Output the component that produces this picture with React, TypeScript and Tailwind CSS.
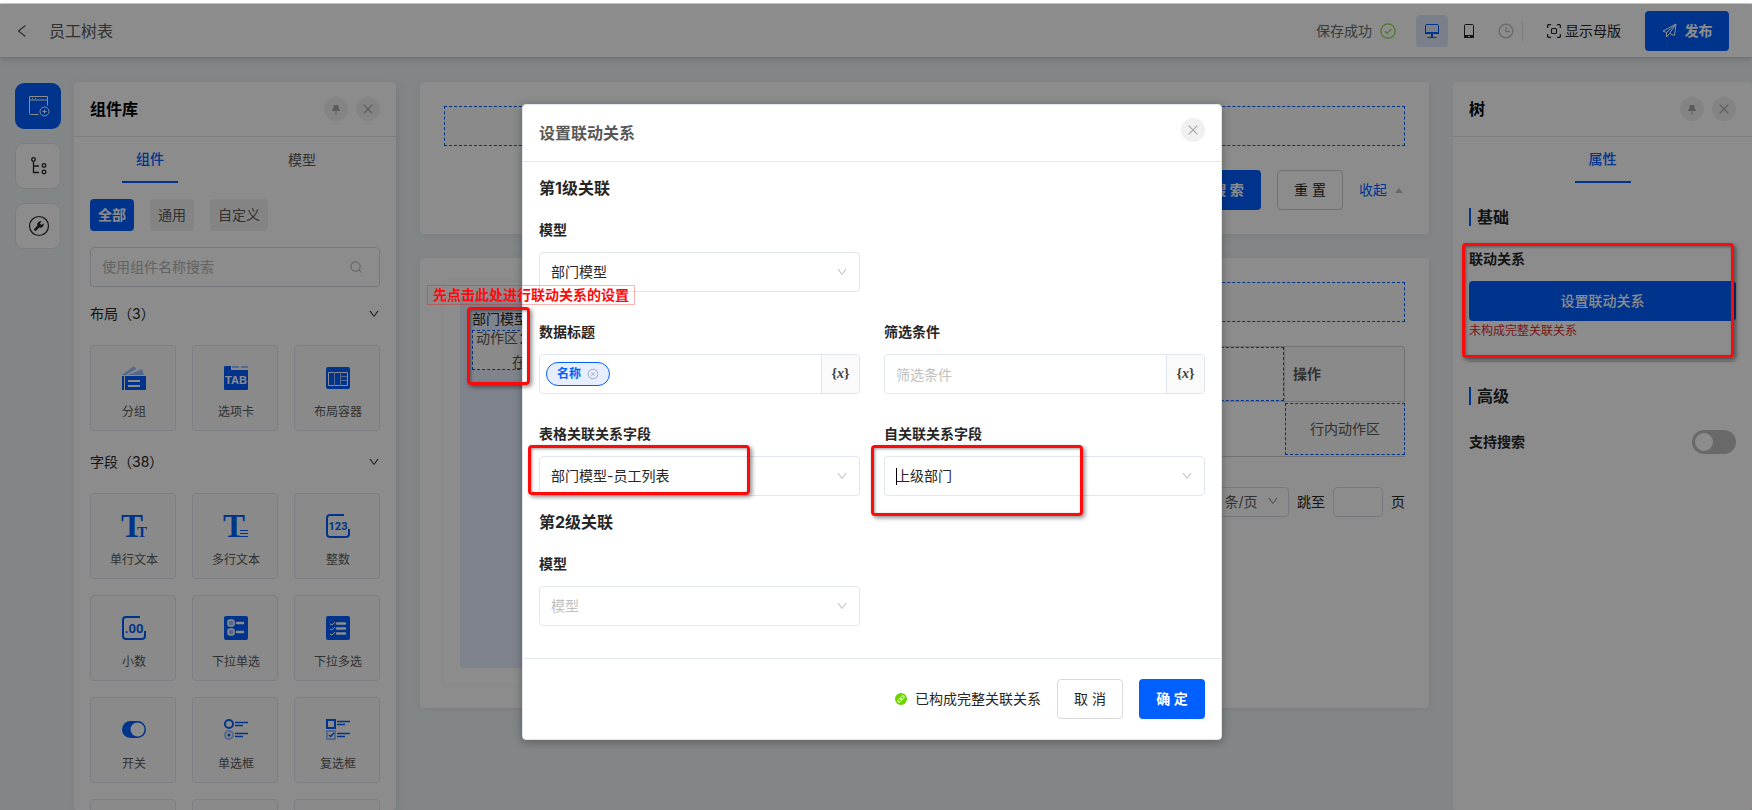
import { useState } from "react"
import type { ReactNode } from "react"
import { AiFillPushpin, AiOutlineClose, AiOutlineCloseCircle, AiOutlineDown, AiOutlineLeft } from "react-icons/ai"

type Tile = { label: string; icon: ReactNode }

const BLUE = "#0060ff"
const PALE = "#9cc0ff"

const layoutTiles: Tile[] = [
  {
    label: "分组",
    icon: (
      <svg width="24" height="24" viewBox="0 0 24 24">
        <path d="M0 9 12 0l2 3L4 9z" fill={PALE} />
        <path d="M6 9 20 3l2 6z" fill={PALE} />
        <path d="M0 10h2v14H0zM3 10h21v14H3z" fill={BLUE} />
        <path d="M6 14h12v2H6zM6 19h12v2H6z" fill="#fff" />
      </svg>
    ),
  },
  {
    label: "选项卡",
    icon: (
      <svg width="24" height="24" viewBox="0 0 24 24">
        <path d="M1 0h6v4h17v19a1 1 0 0 1-1 1H1a1 1 0 0 1-1-1V1a1 1 0 0 1 1-1z" fill={BLUE} />
        <path d="M8 0h7v2H8zM17 0h7v2h-7z" fill={PALE} />
        <text x="12" y="18" textAnchor="middle" fontSize="11" fontWeight="700" fontFamily="Liberation Sans, sans-serif" fill="#fff">
          TAB
        </text>
      </svg>
    ),
  },
  {
    label: "布局容器",
    icon: (
      <svg width="24" height="24" viewBox="0 0 24 24">
        <rect y="1" width="24" height="22" rx="2" fill={BLUE} />
        <path d="M2.500 6.500h19v13h-19z" fill="none" stroke="#fff" />
        <path d="M8.500 6v14M14.500 6v14M15 10.500h6M15 14.500h6" stroke={PALE} />
      </svg>
    ),
  },
]

const fieldTiles: Tile[] = [
  {
    label: "单行文本",
    icon: (
      <svg width="24" height="24" viewBox="0 0 24 24" className="overflow-visible" fill={BLUE} fontFamily="Liberation Serif, serif">
        <text x="-1" y="23" fontSize="33" fontWeight="700">T</text>
        <text x="15" y="23" fontSize="15" fontWeight="700">T</text>
      </svg>
    ),
  },
  {
    label: "多行文本",
    icon: (
      <svg width="24" height="24" viewBox="0 0 24 24" className="overflow-visible" fill={BLUE}>
        <text x="-1" y="23" fontSize="33" fontWeight="700" fontFamily="Liberation Serif, serif">T</text>
        <path d="M16 16h8v1h-8zM16 19h8v1h-8zM16 22h8v1h-8z" />
      </svg>
    ),
  },
  {
    label: "整数",
    icon: (
      <svg width="24" height="24" viewBox="0 0 24 24">
        <path d="M18 1H4a3 3 0 0 0-3 3v16a3 3 0 0 0 3 3h16a3 3 0 0 0 3-3v-5" fill="none" stroke={BLUE} strokeWidth="2" />
        <text x="12" y="16" textAnchor="middle" fontSize="11" fontWeight="700" fontFamily="Roboto, sans-serif" fill={BLUE}>
          123
        </text>
      </svg>
    ),
  },
  {
    label: "小数",
    icon: (
      <svg width="24" height="24" viewBox="0 0 24 24">
        <path d="M18 1H4a3 3 0 0 0-3 3v16a3 3 0 0 0 3 3h16a3 3 0 0 0 3-3v-5" fill="none" stroke={BLUE} strokeWidth="2" />
        <text x="12" y="17" textAnchor="middle" fontSize="13" fontWeight="700" fontFamily="Roboto, sans-serif" fill={BLUE}>
          .00
        </text>
      </svg>
    ),
  },
  {
    label: "下拉单选",
    icon: (
      <svg width="24" height="24" viewBox="0 0 24 24">
        <rect width="24" height="24" rx="2" fill={BLUE} />
        <rect x="4" y="4" width="6" height="6" rx="2" fill={PALE} stroke="#fff" strokeWidth="1.500" />
        <rect x="4" y="13" width="6" height="6" rx="2" fill={PALE} stroke="#fff" strokeWidth="1.500" />
        <path d="M13 7h6M13 16h6" stroke="#fff" strokeWidth="2.500" strokeLinecap="round" />
      </svg>
    ),
  },
  {
    label: "下拉多选",
    icon: (
      <svg width="24" height="24" viewBox="0 0 24 24">
        <rect width="24" height="24" rx="2" fill={BLUE} />
        <path d="m4 8 2 1 3-3M4 13l2 1 3-3M4 18l2 1 3-3" fill="none" stroke="#fff" />
        <path d="M11 7.500h8M11 12.500h8M11 17.500h8" stroke="#fff" strokeWidth="2.500" strokeLinecap="round" />
      </svg>
    ),
  },
  {
    label: "开关",
    icon: (
      <svg width="24" height="24" viewBox="0 0 24 24">
        <rect y="3" width="24" height="17" rx="8.500" fill={BLUE} />
        <circle cx="15.500" cy="11.500" r="7" fill="#fff" />
      </svg>
    ),
  },
  {
    label: "单选框",
    icon: (
      <svg width="24" height="24" viewBox="0 0 24 24" fill="none">
        <circle cx="5" cy="6" r="4" stroke={BLUE} strokeWidth="2" />
        <circle cx="5" cy="17" r="4" stroke={PALE} strokeWidth="2" />
        <circle cx="5" cy="17" r="1.500" fill={BLUE} />
        <path d="M11 4.500h13M11 7.500h8M11 15.500h13M11 18.500h8" stroke={BLUE} strokeWidth="1.600" />
      </svg>
    ),
  },
  {
    label: "复选框",
    icon: (
      <svg width="24" height="24" viewBox="0 0 24 24" fill="none">
        <path d="M1 2h8v8H1z" stroke={BLUE} strokeWidth="2" />
        <path d="M1 13h8v8H1z" stroke={PALE} strokeWidth="2" />
        <path d="m3 17 1.500 1.500L8 15" stroke={BLUE} strokeWidth="1.500" />
        <path d="M11 3.500h13M11 6.500h8M11 15.500h13M11 18.500h8" stroke={BLUE} strokeWidth="1.600" />
      </svg>
    ),
  },
  { label: "日期", icon: null },
  { label: "时间", icon: null },
  { label: "附件", icon: null },
]

function TileGrid({ tiles }: { tiles: Tile[] }) {
  return (
    <div className="grid grid-cols-3 gap-4">
      {tiles.map((tile) => (
        <button
          key={tile.label}
          className="flex h-[86px] flex-col items-center rounded border border-[#e2e6ee] bg-[#fcfcfc] pt-5 pl-0.5 text-xs leading-5 text-[#595959]"
        >
          <span className="mb-3 block size-6">{tile.icon}</span>
          {tile.label}
        </button>
      ))}
    </div>
  )
}

function SectionTitle({ children }: { children: ReactNode }) {
  return (
    <button className="my-5 flex w-full items-center justify-between text-sm leading-[22px] text-[#262626]">
      {children}
      <AiOutlineDown className="size-3" />
    </button>
  )
}

function PanelHeader({ title }: { title: string }) {
  return (
    <div className="flex h-[55px] shrink-0 items-center gap-2 border-b border-[#e4e4e4] px-4">
      <h2 className="flex-1 text-base font-bold text-black">{title}</h2>
      <button aria-label="固定" className="flex size-6 items-center justify-center rounded-full bg-[#f0f0f0] text-[#a6a6a6]">
        <AiFillPushpin className="size-3 -rotate-45" />
      </button>
      <button aria-label="关闭" className="flex size-6 items-center justify-center rounded-full bg-[#f0f0f0] text-[#a6a6a6]">
        <AiOutlineClose className="size-3.5" />
      </button>
    </div>
  )
}

function Header() {
  return (
    <header className="relative z-[1] flex h-[54px] shrink-0 items-center border-b border-[#d4d4d4] bg-white pr-[23px] pl-4 text-sm shadow-[0_2px_6px_rgba(0,0,0,0.12)]">
      <button aria-label="返回" className="mr-[21px] flex w-3 justify-center text-[#595959]">
        <AiOutlineLeft className="size-4 shrink-0" />
      </button>
      <h1 className="flex-1 text-base leading-6 text-[#595959]">员工树表</h1>
      <span className="text-[#6b6b6b]">保存成功</span>
      <svg width="16" height="16" viewBox="0 0 16 16" fill="none" stroke="#8ddc4a" strokeWidth="1.200" className="mr-5 ml-2">
        <circle cx="8" cy="8" r="7.200" />
        <path d="m4.800 8.200 2.400 2.300 4.200-4.700" />
      </svg>
      <button aria-label="桌面端" className="flex size-8 items-center justify-center rounded bg-[#dfe8fb]">
        <svg width="16" height="16" viewBox="0 0 16 16" fill="none">
          <rect x="1.500" y="1.500" width="13" height="9" rx="1" stroke={BLUE} />
          <path d="M1 9h14v2H1zM7 11h2v3H7zM3.500 14h9v1h-9z" fill={BLUE} />
        </svg>
      </button>
      <button aria-label="移动端" className="ml-[13px] flex size-4 items-center justify-center text-[#262626]">
        <svg width="12" height="16" viewBox="0 0 12 16" fill="none">
          <rect x="1.500" y="1.500" width="9" height="13" rx="1" stroke="currentColor" />
          <path d="M1 12h10v3H1z" fill="currentColor" />
          <path d="M5 13.500h2" stroke="#fff" />
        </svg>
      </button>
      <button aria-label="历史" className="mr-2 ml-[21px] text-[#bfbfbf]">
        <svg width="16" height="16" viewBox="0 0 16 16" fill="none" stroke="currentColor" strokeWidth="1.300">
          <circle cx="8" cy="8" r="6.800" />
          <path d="M8 4v4.500h4" />
        </svg>
      </button>
      <span className="h-5 w-px bg-[#e4e4e4]" />
      <button className="ml-6 flex items-center gap-1 text-[#262626]">
        <svg width="14" height="14" viewBox="0 0 14 14" fill="none" stroke="currentColor">
          <path
            d="M.6 4V2A1.400 1.400 0 0 1 2 .6h2M10 .6h2A1.400 1.400 0 0 1 13.400 2v2M13.400 10v2a1.400 1.400 0 0 1-1.400 1.400h-2M4 13.400H2A1.400 1.400 0 0 1 .6 12v-2"
            strokeWidth="1.300"
          />
          <rect x="4.500" y="4.500" width="5" height="5" rx="1" strokeWidth="1.200" />
        </svg>
        显示母版
      </button>
      <button className="ml-6 flex h-10 w-[84px] items-center justify-center gap-2 rounded bg-[#0060ff] font-bold text-white">
        <svg width="15" height="15" viewBox="0 0 15 15" fill="none" stroke="currentColor" strokeLinejoin="round">
          <path d="M14 1 1 8l3.500 1.500M14 1l-1.500 11.500L7.500 10.500M14 1 4.500 9.500V14l3-3.500M14 1 7.500 10.500" />
        </svg>
        发布
      </button>
    </header>
  )
}

function Rail() {
  return (
    <nav className="mt-px flex w-[46px] shrink-0 flex-col gap-3.5">
      <button aria-label="组件库" className="flex size-[46px] items-center justify-center rounded-[9px] bg-[#0060ff] pl-0.5">
        <svg width="22" height="22" viewBox="0 0 22 22" fill="none" stroke="#fff">
          <path d="M10.500 19.500H2.500a1 1 0 0 1-1-1V1.500h18v9M1.500 5h18M4 3.300h1M7 3.300h1" />
          <circle cx="16.500" cy="16.500" r="4.500" />
          <path d="M14.500 16.500h4M16.500 14.500v4" />
        </svg>
      </button>
      <button
        aria-label="大纲树"
        className="flex size-[46px] items-center justify-center rounded-[9px] border border-[#e4e4e4] bg-white pl-0.5 text-[#262626]"
      >
        <svg width="18" height="18" viewBox="0 0 18 18" fill="none" stroke="currentColor" strokeWidth="1.300">
          <circle cx="3.500" cy="2.500" r="1.800" />
          <circle cx="14" cy="8.500" r="1.800" />
          <circle cx="14" cy="15" r="1.800" />
          <path d="M3.500 5v10.500H9M3.500 9H9" />
        </svg>
      </button>
      <button
        aria-label="工具"
        className="flex size-[46px] items-center justify-center rounded-[9px] border border-[#e4e4e4] bg-white pl-0.5 text-[#262626]"
      >
        <svg width="22" height="22" viewBox="0 0 22 22" fill="none">
          <circle cx="11" cy="11" r="9.500" stroke="currentColor" strokeWidth="1.200" />
          <path
            d="M15.600 8.200 13.500 10l-1.600-1.500L13.600 6.300a3.500 3.500 0 0 0-4.300 4.300L6.400 13.700a1.300 1.300 0 0 0 1.900 1.900L11.300 12.600a3.500 3.500 0 0 0 4.300-4.400z"
            fill="currentColor"
          />
        </svg>
      </button>
    </nav>
  )
}

function Library() {
  return (
    <aside className="ml-[13px] flex w-[322px] shrink-0 flex-col rounded bg-white shadow-[2px_2px_10px_rgba(0,40,120,0.1)]">
      <PanelHeader title="组件库" />
      <div className="px-4">
        <div className="flex text-sm">
          <button className="mr-24 ml-8 h-[46px] w-14 border-b-2 border-[#0060ff] font-medium text-[#0060ff]">组件</button>
          <button className="h-[46px] w-14 text-[#595959]">模型</button>
        </div>
        <div className="mt-4 flex gap-4 text-sm">
          <button className="h-8 rounded bg-[#0060ff] px-2 font-bold text-white">全部</button>
          <button className="h-8 rounded bg-[#f0f0f0] px-2 text-[#595959]">通用</button>
          <button className="h-8 rounded bg-[#f0f0f0] px-2 text-[#595959]">自定义</button>
        </div>
        <div className="mt-4 -mb-1 flex h-10 items-center rounded border border-[#d9dde5] pr-[17px] pl-[11px] text-sm">
          <input
            aria-label="使用组件名称搜索"
            placeholder="使用组件名称搜索"
            className="min-w-0 flex-1 outline-none placeholder:text-[#b4b4b4]"
          />
          <svg width="12" height="12" viewBox="0 0 12 12" fill="none" stroke="#a6a6a6">
            <circle cx="5.500" cy="5.500" r="4.700" />
            <path d="m9 9 2.500 2.500" />
          </svg>
        </div>
        <SectionTitle>布局（3）</SectionTitle>
        <TileGrid tiles={layoutTiles} />
        <SectionTitle>字段（38）</SectionTitle>
        <TileGrid tiles={fieldTiles} />
      </div>
    </aside>
  )
}

function Canvas() {
  return (
    <main className="mx-6 flex min-w-0 flex-1 flex-col gap-6 text-sm">
      <section className="h-[152px] shrink-0 rounded bg-white p-6 shadow-[0_2px_10px_rgba(0,0,0,0.06)]">
        <div className="h-10 border border-dashed border-[#0060ff] bg-[#fcfcfc]" />
        <div className="mt-6 flex items-center justify-end gap-4">
          <button className="h-10 w-[66px] rounded bg-[#0060ff] font-bold text-white">搜 索</button>
          <button className="h-10 w-[66px] rounded border border-[#d0d0d0] text-[#262626]">重 置</button>
          <button className="flex items-center gap-2 pr-0.5 text-[#0060ff]">
            收起
            <svg width="8" height="5" viewBox="0 0 8 5">
              <path d="M4 0l4 5H0z" fill="#bfbfbf" />
            </svg>
          </button>
        </div>
      </section>

      <section className="flex h-[450px] shrink-0 rounded bg-white p-6 shadow-[0_2px_10px_rgba(0,0,0,0.06)]">
        <div className="mr-6 w-[240px] shrink-0 rounded p-4 shadow-[0_0_6px_rgba(0,0,0,0.06)]">
          <div className="h-[370px] rounded bg-[#e6eeff] px-3 pt-[9px]">
            <h3 className="leading-[23px] text-[#262626]">部门模型</h3>
            <div className="flex h-10 flex-col justify-center border border-dashed border-[#0060ff] bg-[#fcfcfc] pl-[3px] leading-6 text-[#595959]">
              <p>动作区：拖拽组件</p>
              <p className="pl-9">在此处</p>
            </div>
          </div>
        </div>
        <div className="min-w-0 flex-1">
          <div className="h-10 border border-dashed border-[#0060ff] bg-[#fcfcfc]" />
          <table className="mt-6 w-full border-separate border-spacing-0 text-left">
            <thead>
              <tr className="h-14">
                <th className="border border-[#d0d0d0] p-0">
                  <div className="h-[54px] border border-dashed border-[#0060ff] bg-[#fcfcfc]" />
                </th>
                <th className="w-[120px] rounded-tr border-y border-r border-[#d0d0d0] bg-[#fcfcfc] px-2 font-bold text-[#595959]">操作</th>
              </tr>
            </thead>
            <tbody>
              <tr className="h-[55px]">
                <td className="border-b border-[#d0d0d0]" />
                <td className="border-b border-[#d0d0d0] p-0 text-center text-[#595959]">
                  <div className="flex h-[52px] items-center justify-center border border-dashed border-[#0060ff] bg-[#fafafa]">行内动作区</div>
                </td>
              </tr>
            </tbody>
          </table>
          <div className="mt-[30px] flex items-center justify-end text-[#262626]">
            <div className="relative">
              <select aria-label="每页条数" className="h-[30px] w-[94px] appearance-none rounded border border-[#d9dde5] pl-2.5 text-[#595959]">
                <option>10 条/页</option>
              </select>
              <AiOutlineDown className="pointer-events-none absolute top-2 right-2.5 size-3 text-[#8c8c8c]" />
            </div>
            <label htmlFor="page-jump" className="mr-2 ml-2">跳至</label>
            <input id="page-jump" className="mr-2 h-[30px] w-[50px] rounded border border-[#d9dde5]" />
            页
          </div>
        </div>
      </section>
    </main>
  )
}

function BarTitle({ children }: { children: ReactNode }) {
  return <h3 className="border-l-2 border-[#0060ff] pl-1.5 text-base leading-[18px] font-bold text-[#262626]">{children}</h3>
}

function Properties() {
  const [searchable, setSearchable] = useState(false)

  return (
    <aside className="flex w-[299px] shrink-0 flex-col rounded bg-white text-sm">
      <PanelHeader title="树" />
      <div className="flex flex-col px-4">
        <button className="h-[46px] w-14 self-center border-b-2 border-[#0060ff] font-medium text-[#0060ff]">属性</button>
        <div className="mt-[25px]">
          <BarTitle>基础</BarTitle>
        </div>
        <div className="mt-[22px] leading-[22px] font-bold text-[#262626]">联动关系</div>
        <button className="mt-[11px] h-10 rounded bg-[#0060ff] font-medium text-white">设置联动关系</button>
        <p className="text-xs leading-5 text-[#dd2a2a]">未构成完整关联关系</p>
        <hr className="mt-5 border-[#e4e4e4]" />
        <div className="mt-[25px]">
          <BarTitle>高级</BarTitle>
        </div>
        <label className="mt-[25px] flex items-center justify-between font-bold text-[#262626]">
          支持搜索
          <input
            type="checkbox"
            role="switch"
            checked={searchable}
            onChange={(e) => setSearchable(e.target.checked)}
            className="h-6 w-11 appearance-none rounded-full bg-[#bfbfbf] p-[3px] before:block before:size-[18px] before:rounded-full before:bg-white checked:bg-[#0060ff] checked:before:ml-5"
          />
        </label>
      </div>
    </aside>
  )
}

function SelectField({ id, label, value, caret }: { id: string; label: string; value?: string; caret?: boolean }) {
  return (
    <div>
      <label htmlFor={id} className="mb-2.5 block leading-6 font-bold text-[#262626]">{label}</label>
      <div className="relative">
        <select
          id={id}
          className={`h-10 w-full appearance-none rounded border border-[#e2e6ee] bg-white pl-[11px] ${value ? "text-[#262626]" : "text-[#bfbfbf]"}`}
        >
          <option>{value ?? label}</option>
        </select>
        {caret && <span className="absolute top-3 left-3 h-[17px] w-px bg-black" />}
        <AiOutlineDown className="pointer-events-none absolute top-3.5 right-3 size-3 text-[#bfbfbf]" />
      </div>
    </div>
  )
}

function FormulaField({ id, label, children }: { id: string; label: string; children?: ReactNode }) {
  return (
    <div>
      <label htmlFor={id} className="mb-2.5 block leading-6 font-bold text-[#262626]">{label}</label>
      <div className="flex h-10 items-center overflow-hidden rounded border border-[#e2e6ee]">
        {children}
        <input
          id={id}
          placeholder={children ? undefined : label}
          className="h-full min-w-0 flex-1 pl-[11px] outline-none placeholder:text-[#bfbfbf]"
        />
        <button
          aria-label="插入变量"
          className="h-full w-[38px] border-l border-[#e2e6ee] bg-[#fafafa] font-['Liberation_Serif',serif] text-sm font-bold text-[#404040]"
        >
          {"{"}
          <i>x</i>
          {"}"}
        </button>
      </div>
    </div>
  )
}

function LinkageDialog() {
  return (
    <div
      role="dialog"
      aria-labelledby="linkage-title"
      className="w-[700px] rounded border border-[#e2e6ee] bg-white text-sm shadow-[0_2px_10px_rgba(0,0,0,0.3)]"
    >
      <div className="flex justify-between border-b border-[#e2e6ee] px-4">
        <h2 id="linkage-title" className="text-base leading-14 font-bold text-[#595959]">设置联动关系</h2>
        <button aria-label="关闭" className="mt-[13px] flex size-6 items-center justify-center rounded-full bg-[#f0f0f0] text-[#a6a6a6]">
          <AiOutlineClose className="size-3.5" />
        </button>
      </div>

      <div className="px-4 pt-3.5 pb-8">
        <h3 className="mb-[18px] text-base leading-6 font-bold text-[#262626]">第1级关联</h3>
        <div className="grid grid-cols-2 gap-x-6 gap-y-7">
          <SelectField id="model-1" label="模型" value="部门模型" />
          <div />
          <FormulaField id="title-field" label="数据标题">
            <span className="ml-1.5 flex h-6 items-center gap-1.5 rounded-full border border-[#0060ff] bg-[#e6eeff] px-2.5 text-xs font-bold text-[#0060ff]">
              名称
              <button aria-label="移除名称" className="text-[#a6b0c4]">
                <AiOutlineCloseCircle className="size-3" />
              </button>
            </span>
          </FormulaField>
          <FormulaField id="filter-field" label="筛选条件" />
          <SelectField id="table-relation" label="表格关联关系字段" value="部门模型-员工列表" />
          <SelectField id="self-relation" label="自关联关系字段" value="上级部门" caret />
        </div>
        <h3 className="mt-3.5 mb-[18px] text-base leading-6 font-bold text-[#262626]">第2级关联</h3>
        <div className="grid grid-cols-2 gap-x-6">
          <SelectField id="model-2" label="模型" />
        </div>
      </div>

      <div className="flex items-center justify-end gap-4 border-t border-[#e2e6ee] px-4 py-5 text-[#262626]">
        <span className="flex items-center gap-2">
          <svg width="12" height="12" viewBox="0 0 12 12" fill="none">
            <circle cx="6" cy="6" r="6" fill="#6dd400" />
            <g transform="rotate(-45 6 6)" stroke="#fff" strokeWidth="0.900">
              <rect x="2" y="4.700" width="4.600" height="2.600" rx="1.300" />
              <rect x="5.400" y="4.700" width="4.600" height="2.600" rx="1.300" />
            </g>
          </svg>
          已构成完整关联关系
        </span>
        <button className="h-10 w-[66px] rounded border border-[#d9d9d9] bg-white">取 消</button>
        <button className="h-10 w-[66px] rounded bg-[#0060ff] font-bold text-white">确 定</button>
      </div>
    </div>
  )
}

// Red guide marks that sit over both the page and the dialog
function GuideMarks() {
  const frame =
    "absolute rounded border-3 border-[#ff0a0a] shadow-[2px_2px_4px_rgba(0,0,0,0.45),inset_1px_1px_3px_rgba(0,0,0,0.4)]"

  return (
    <div className="pointer-events-none absolute inset-0 z-20">
      <p className="absolute top-[281px] left-[427px] border border-[#ff0000]/30 px-[5px] text-sm leading-[18px] font-bold text-[#ff0a0a]">
        先点击此处进行联动关系的设置
      </p>
      <div className={`${frame} top-[303px] left-[467px] h-[78px] w-[63px]`} />
      <div className={`${frame} top-[441px] left-[528px] h-[50px] w-[222px]`} />
      <div className={`${frame} top-[441px] left-[871px] h-[71px] w-[212px]`} />
      <div className={`${frame} top-[239px] right-[18px] h-[115px] w-[272px]`} />
    </div>
  )
}

export default function App() {
  return (
    <div className="flex h-screen flex-col overflow-hidden font-['Inter','Noto_Sans_CJK_SC',sans-serif]">
      <div className="h-1 shrink-0 border-b border-[#c8c8c8] bg-white" />
      <div className="relative flex min-h-0 flex-1 flex-col bg-[#edf4f5]">
        <Header />
        <div className="flex min-h-0 flex-1 overflow-hidden pt-6 pl-[15px]">
          <Rail />
          <Library />
          <Canvas />
          <Properties />
        </div>
        <div className="absolute inset-0 z-10 flex items-start justify-center bg-black/45 pt-[100px] pr-2">
          <LinkageDialog />
        </div>
        <GuideMarks />
      </div>
    </div>
  )
}
